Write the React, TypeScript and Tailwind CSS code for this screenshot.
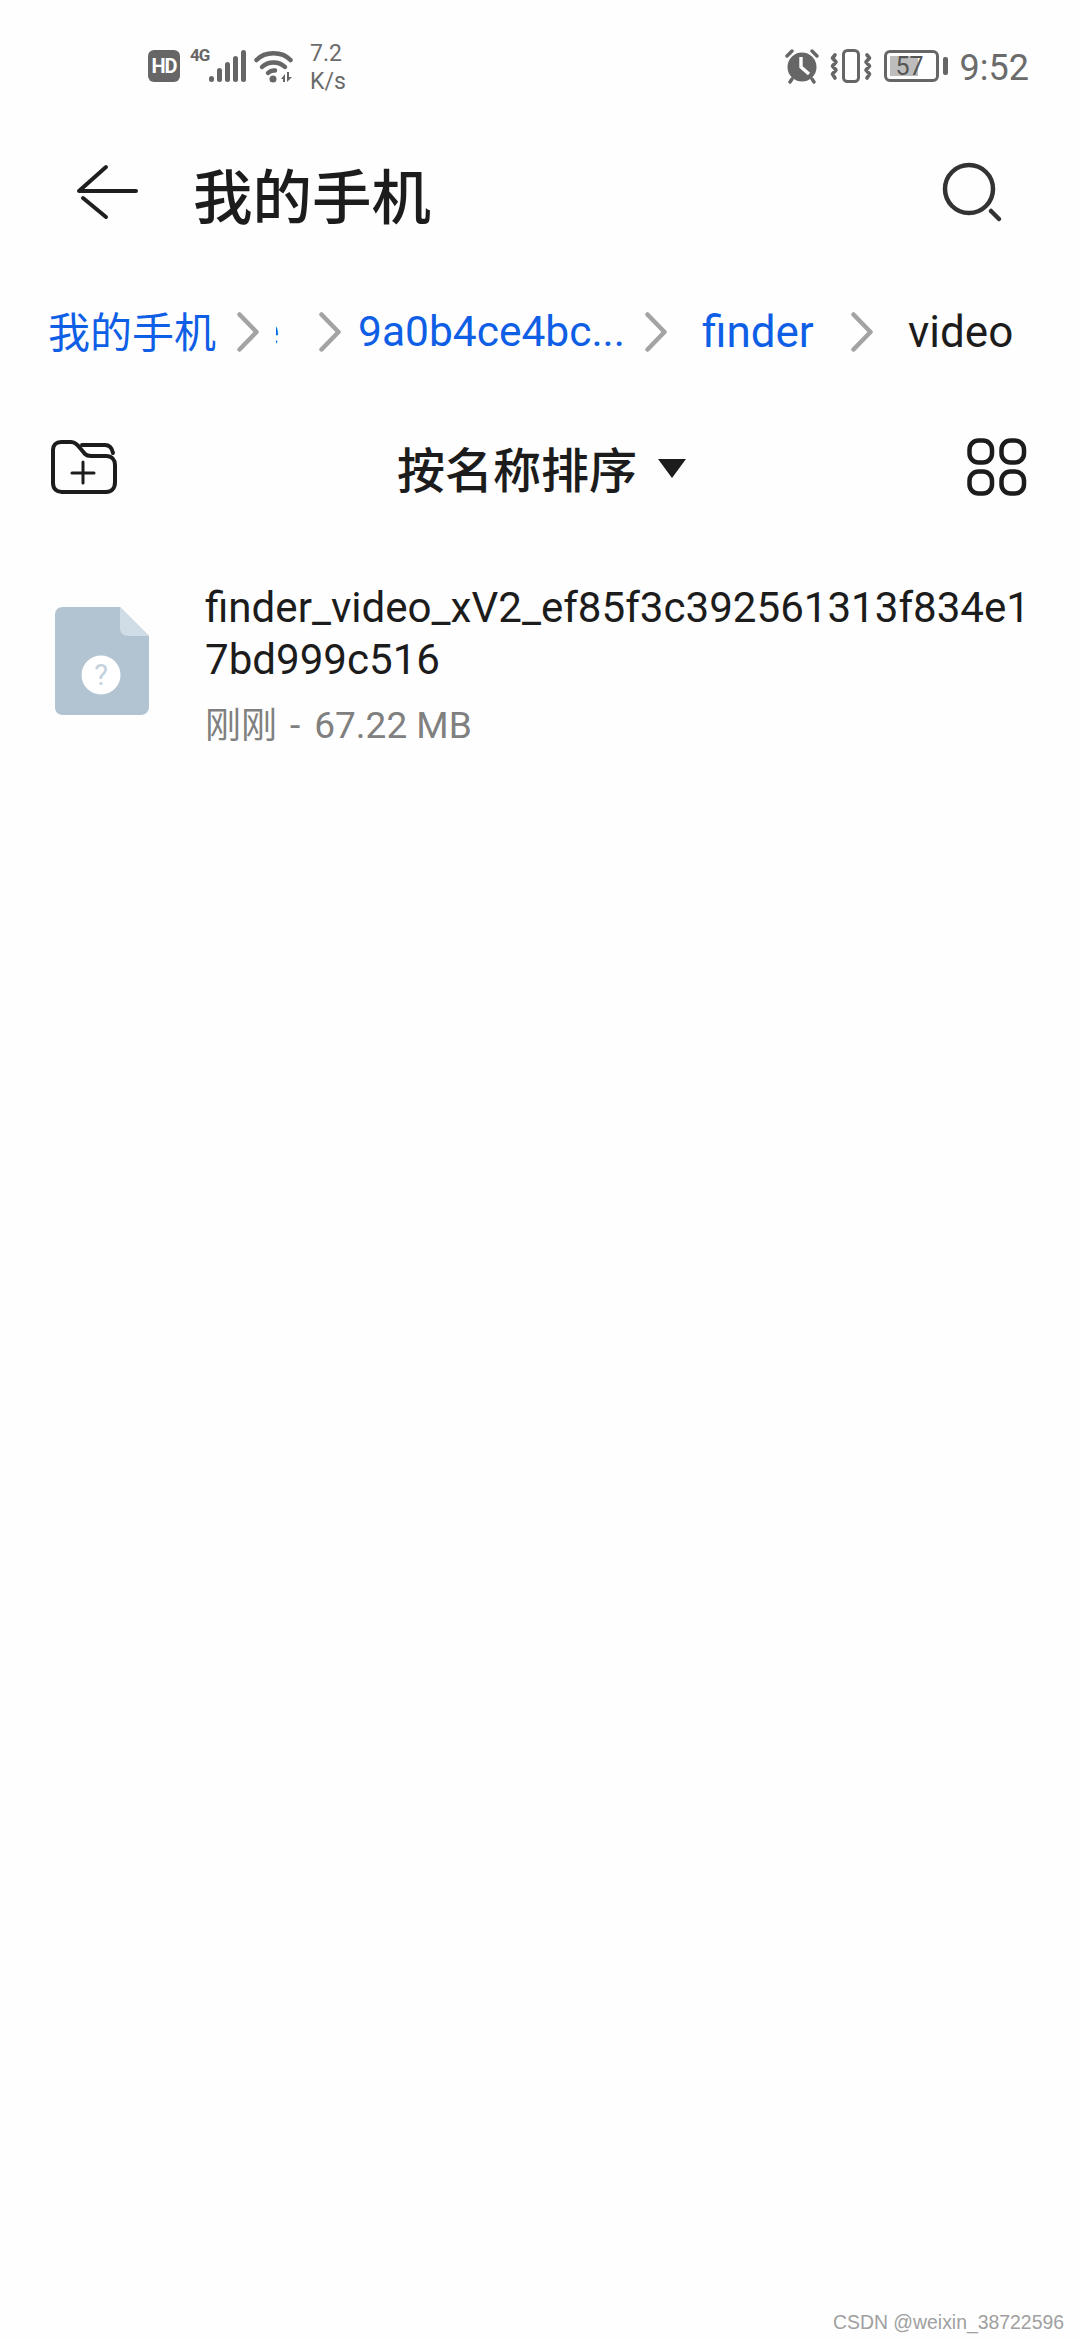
import React from "react";

const latin = "font-['Roboto','Noto_Sans_CJK_SC',sans-serif]";

function Chevron({ className }: { className: string }) {
  return (
    <svg width="22" height="40" viewBox="0 0 22 40" fill="none" className={`shrink-0 ${className}`}>
      <path d="M2.5 2.5 L19.5 20 L2.5 37.5" stroke="#a3a3a3" strokeWidth="4.5" strokeLinecap="round" strokeLinejoin="round" />
    </svg>
  );
}

function StatusLeft() {
  return (
    <div className="flex items-center">
      <span className="flex h-[32px] w-[32px] items-center justify-center rounded-[6px] bg-[#666666] text-[20px] font-bold leading-none tracking-[-1px] text-white">
        HD
      </span>
      <div className="relative ml-[10px] h-[34px] w-[56px]">
        <span className="absolute left-0 top-[-2px] text-[17px] font-bold leading-[16px] tracking-[-1px] text-[#666666]">4G</span>
        <svg width="56" height="34" viewBox="0 0 56 34" className="absolute inset-0">
          <g fill="#666666">
            <rect x="19" y="27" width="5" height="6" rx="2.5" />
            <rect x="27" y="19" width="5" height="14" rx="2.5" />
            <rect x="35" y="13" width="5" height="20" rx="2.5" />
            <rect x="43" y="7" width="5" height="26" rx="2.5" />
            <rect x="51" y="1" width="5" height="32" rx="2.5" />
          </g>
        </svg>
      </div>
      <svg width="40" height="36" viewBox="0 0 40 36" fill="none" className="ml-[8px]">
        <g stroke="#666666" strokeWidth="4.5" strokeLinecap="round">
          <path d="M2.5 12 C11 3 28 3 36.5 12" />
          <path d="M8 19 C14 13 25 13 31 19" />
          <path d="M14 25 C16 23 18 22 21 22.5" />
        </g>
        <circle cx="19" cy="31" r="3.5" fill="#666666" />
        <path d="M27 31 L31 26 V34 H29 V31 Z M33 24 V34 L38 29 H35 V24 Z" fill="#666666" />
      </svg>
      <div className="ml-[16px] mt-[3px] flex w-[40px] flex-col text-[23px] leading-[28px] text-[#6b6b6b]">
        <span>7.2</span>
        <span>K/s</span>
      </div>
    </div>
  );
}

function StatusRight() {
  return (
    <div className="flex items-center">
      <svg width="36" height="36" viewBox="0 0 36 36" fill="none">
        <circle cx="18" cy="19" r="14.5" fill="#666666" />
        <path d="M17 9 V19 L25 26" stroke="#fff" strokeWidth="3.4" strokeLinejoin="round" />
        <path d="M3 8 L8 3 M28 3 L33 8 M8 31 L6 34 M28 31 L30 34" stroke="#666666" strokeWidth="3.4" strokeLinecap="round" />
      </svg>
      <svg width="42" height="36" viewBox="0 0 42 36" fill="none" className="ml-[10px]">
        <rect x="13.5" y="2.5" width="15" height="31" rx="4" stroke="#666666" strokeWidth="3" />
        <path d="M5 7 L2.5 10 L6 14 L2.5 18 L6 22 L2.5 26 L5 30 M37 7 L39.5 10 L36 14 L39.5 18 L36 22 L39.5 26 L37 30" stroke="#666666" strokeWidth="3.6" strokeLinecap="round" strokeLinejoin="round" />
      </svg>
      <div className="relative ml-[12px] flex h-[32px] w-[55px] items-center justify-center rounded-[6px] border-[3px] border-[#666666]">
        <span className="absolute bottom-[3px] left-[3px] top-[3px] w-[28px] bg-[#bdbdbd]" />
        <span className="relative ml-[-3px] text-[25px] leading-none text-[#555555]">57</span>
      </div>
      <span className="ml-[4px] h-[18px] w-[5px] rounded-[2px] bg-[#666666]" />
      <span className="ml-[12px] mt-[3px] text-[36px] leading-none text-[#6b6b6b]">9:52</span>
    </div>
  );
}

export default function App() {
  return (
    <div className={`relative flex h-[2340px] w-[1080px] flex-col overflow-hidden bg-[#fefefe] ${latin}`}>
      {/* status bar */}
      <div className="flex h-[100px] items-center justify-between pl-[148px] pr-[51px] pt-[32px]">
        <StatusLeft />
        <StatusRight />
      </div>

      {/* title bar */}
      <div className="flex h-[190px] items-start pl-[76px] pr-[76px] pt-[62px]">
        <svg width="62" height="58" viewBox="0 0 62 58" fill="none" className="mt-[2px] shrink-0">
          <path d="M30 3 L3 27 H60 M7 34 L30 53" stroke="#1f1f1f" strokeWidth="4" strokeLinecap="round" strokeLinejoin="round" />
        </svg>
        <h1 className="ml-[55px] font-['Noto_Sans_CJK_SC',sans-serif] text-[59.5px] font-medium leading-[62px] text-[#1c1c1c]">我的手机</h1>
        <svg width="62" height="62" viewBox="0 0 62 62" fill="none" className="ml-auto shrink-0">
          <circle cx="27" cy="27" r="24" stroke="#333333" strokeWidth="4.5" />
          <path d="M49 49 L57 57" stroke="#333333" strokeWidth="4.5" strokeLinecap="round" />
        </svg>
      </div>

      {/* breadcrumb */}
      <div className="flex h-[84px] items-center whitespace-nowrap pl-[48px] text-[42px] leading-[50px] text-[#0f5fe6]">
        <span className="mb-[5px] w-[168px] font-['Noto_Sans_CJK_SC',sans-serif]">我的手机</span>
        <Chevron className="ml-[21px]" />
        <span className="ml-[17px] w-[4px] overflow-hidden">
          <span className="ml-[-19px] block">e</span>
        </span>
        <Chevron className="ml-[39px]" />
        <span className="ml-[17px] w-[266px] text-[42.5px]">9a0b4ce4bc...</span>
        <Chevron className="ml-[21px]" />
        <span className="ml-[35px] w-[113px] text-[44px]">finder</span>
        <Chevron className="ml-[36px]" />
        <span className="ml-[35px] text-[44px] text-[#1c1c1c]">video</span>
      </div>

      {/* sort row */}
      <div className="mt-[45px] flex h-[96px] items-center pl-[50px] pr-[53px]">
        <svg width="68" height="56" viewBox="0 0 68 56" fill="none" className="shrink-0">
          <path d="M3 11 C3 6 6 3 11 3 H21 C25 3 27 5 30 9 L35 15 C37 17 38 17 41 17 H56 C62 17 65 21 65 26 V43 C65 50 61 53 56 53 H12 C7 53 3 50 3 44 Z" stroke="#1c1c1c" strokeWidth="4" strokeLinejoin="round" />
          <path d="M32 6 H55 C60 6 62 9 63 14" stroke="#1c1c1c" strokeWidth="4" strokeLinecap="round" />
          <path d="M22 34 H44 M33 23 V44" stroke="#1c1c1c" strokeWidth="3" strokeLinecap="round" />
        </svg>
        <div className="ml-[279px] flex items-center">
          <span className="font-['Noto_Sans_CJK_SC',sans-serif] text-[48px] font-medium leading-[60px] text-[#1c1c1c]">按名称排序</span>
          <svg width="28" height="19" viewBox="0 0 28 19" className="ml-[21px] mt-[3px] shrink-0">
            <path d="M0 0 H28 L14 19 Z" fill="#1c1c1c" />
          </svg>
        </div>
        <svg width="60" height="58" viewBox="0 0 60 58" fill="none" className="ml-auto shrink-0">
          <g stroke="#1c1c1c" strokeWidth="4.5">
            <rect x="2.5" y="2.5" width="22.5" height="22" rx="9" />
            <rect x="34.5" y="2.5" width="22.5" height="22" rx="9" />
            <rect x="2.5" y="33.5" width="22.5" height="22" rx="9" />
            <rect x="34.5" y="33.5" width="22.5" height="22" rx="9" />
          </g>
        </svg>
      </div>

      {/* file row */}
      <div className="flex items-start pl-[55px] pt-[67px]">
        <svg width="94" height="108" viewBox="0 0 94 108" className="mt-[25px] shrink-0">
          <path d="M8 0 H65 L94 29 V100 C94 105 90 108 86 108 H8 C3 108 0 105 0 100 V8 C0 3 3 0 8 0 Z" fill="#b2c4d2" />
          <path d="M65 0 L94 29 H74 C68 29 65 26 65 20 Z" fill="#d0dce6" />
          <circle cx="46" cy="68" r="19.5" fill="#ffffff" />
          <text x="46" y="78" textAnchor="middle" fontSize="29" fill="#c4d2de" fontFamily="Roboto, sans-serif">?</text>
        </svg>
        <div className="ml-[56px] w-[828px]">
          <p className="break-all text-[42.1px] leading-[52px] text-[#1c1c1c]">finder_video_xV2_ef85f3c392561313f834e17bd999c516</p>
          <p className="mt-[10px] text-[37px] leading-[52px] text-[#808080]">
            <span className="font-['Noto_Sans_CJK_SC',sans-serif] text-[36px]">刚刚</span>
            <span className="ml-[13px] mr-[14px]">-</span>67.22 MB
          </p>
        </div>
      </div>

      <span className="absolute bottom-[6px] right-[16px] font-['Liberation_Sans',sans-serif] text-[19.4px] leading-[24px] text-[#a0a0a0]">CSDN @weixin_38722596</span>
    </div>
  );
}
